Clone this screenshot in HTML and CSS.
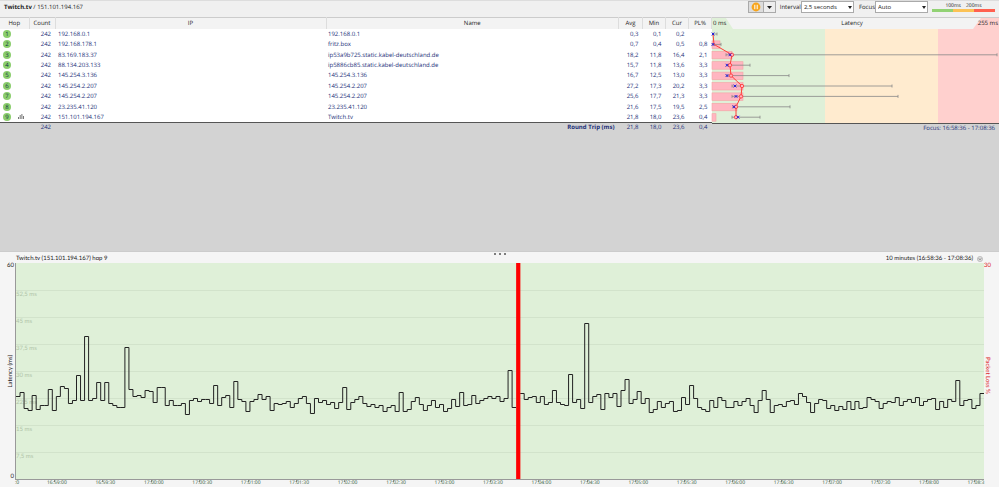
FILE: index.html
```html
<!DOCTYPE html>
<html lang="en">
<head>
<meta charset="utf-8">
<title>Twitch.tv / 151.101.194.167</title>
<link rel="stylesheet" href="styles.css">
</head>
<body>
<header class="toolbar">
  <h1 class="target"><b>Twitch.tv</b> / 151.101.194.167</h1>
  <div class="split">
    <button class="pause" type="button" aria-label="Pause"><svg viewBox="0 0 10 10" width="10" height="10"><circle cx="5" cy="5" r="4.4" fill="#f8a51b"/><path d="M3.8 2.8v4.4M6.2 2.8v4.4" stroke="#fff" stroke-width="1"/></svg></button>
    <button class="more" type="button" aria-label="More"><svg viewBox="0 0 5 3" width="5" height="3"><path d="M0 0h5L2.5 3z" fill="#222"/></svg></button>
  </div>
  <label class="field" for="interval">Interval</label>
  <span class="pick"><select id="interval"><option>2,5 seconds</option></select></span>
  <label class="field" for="focus">Focus</label>
  <span class="pick"><select id="focus"><option>Auto</option></select></span>
  <div class="legend">
    <div class="legend-text"><span>100ms</span><span>200ms</span></div>
    <div class="legend-bar"><i class="good"></i><i class="warn"></i><i class="bad"></i></div>
  </div>
</header>

<main>
<section class="trace">
  <table>
    <colgroup><col class="c-hop"><col class="c-count"><col class="c-ip"><col class="c-name"><col class="c-avg"><col class="c-num"><col class="c-num"><col class="c-num"></colgroup>
    <thead><tr><th>Hop</th><th>Count</th><th>IP</th><th>Name</th><th>Avg</th><th>Min</th><th>Cur</th><th>PL%</th></tr></thead>
    <tbody id="hops"></tbody>
    <tfoot><tr><td></td><td class="n">242</td><td></td><td class="n rt">Round Trip (ms)</td><td class="n">21,8</td><td class="n">18,0</td><td class="n">23,6</td><td class="n">0,4</td></tr></tfoot>
  </table>
  <div class="latency">
    <div class="latency-body">
      <div class="latency-head"><span>0 ms</span><span>Latency</span><span>255 ms</span></div>
      <svg class="latency-plot" id="latency" viewBox="0 0 287 94" preserveAspectRatio="none"></svg>
    </div>
    <p class="focus-range">Focus: 16:58:36 - 17:08:36</p>
  </div>
</section>

<section class="timeline">
  <div class="grip"><i></i><i></i><i></i></div>
  <div class="timeline-head"><span>Twitch.tv (151.101.194.167) hop 9</span><span class="range">10 minutes (16:58:36 - 17:08:36) <svg viewBox="0 0 6 6" width="6" height="6"><circle cx="3" cy="3" r="2.6" fill="#ddd" stroke="#aaa" stroke-width=".6"/><path d="M1.8 2.4L3 3.8l1.2-1.4" fill="none" stroke="#666" stroke-width=".7"/></svg></span></div>
  <div class="chart">
    <div class="y-axis"><span>60</span><span class="up">Latency (ms)</span><span>0</span></div>
    <div class="plot">
      <div class="bands"><span></span><span>52,5 ms</span><span>45 ms</span><span>37,5 ms</span><span>30 ms</span><span>22,5 ms</span><span>15 ms</span><span>7,5 ms</span></div>
      <svg id="graph" viewBox="0 0 240 216" preserveAspectRatio="none"></svg>
    </div>
    <div class="loss-axis"><span>30</span><span class="down">Packet Loss %</span></div>
  </div>
  <div class="times" id="times"></div>
</section>
</main>
<script src="app.js"></script>
</body>
</html>
```
FILE: styles.css
```css
* { box-sizing: border-box; }
body { margin: 0; height: 100vh; display: flex; flex-direction: column; background: #f5f5f5; color: #222; font: 6px/8px "Open Sans", "Noto Sans", sans-serif; text-rendering: geometricPrecision; overflow: hidden; }
h1, p { margin: 0; font-weight: 400; }
.toolbar { display: flex; align-items: center; height: 17px; flex: none; padding: 0 4px 4px; background: #f0f0f0; border-top: 1px solid #ddd; }
.target { flex: 1; font-size: 6px; line-height: 10px; }
.split { display: flex; margin-right: 4px; }
.split button { display: flex; align-items: center; justify-content: center; height: 12px; padding: 0; border: 1px solid #aaa; background: #ddd; }
.split .pause { width: 16px; }
.split .more { width: 12px; border-left: 0; background: #eee; }
.pick { position: relative; display: flex; margin-right: 4px; }
.pick:first-of-type { margin-right: 5px; }
.pick::after { content: ""; position: absolute; right: 2px; top: 5px; border: 2px solid transparent; border-top: 3px solid #222; border-bottom: 0; }
.pick select { appearance: none; width: 53px; height: 12px; padding: 0 2px; border: 1px solid #aaa; border-radius: 0; background: #fff; color: #222; font: inherit; }
.legend { width: 63px; font-size: 5px; line-height: 6px; }
.legend-text { display: flex; justify-content: center; gap: 5px; }
.legend-bar { display: flex; height: 3px; }
.legend-bar i { flex: 1; }
.good { background: #92d274; }
.warn { background: #fcc255; }
.bad { background: #ff6050; }
main { flex: 1; display: flex; flex-direction: column; min-height: 0; }
.trace { flex: 1; display: flex; align-items: flex-start; background: #d3d3d3; min-height: 0; }
table { flex: 1; min-width: 0; table-layout: fixed; border-collapse: collapse; border-top: 1px solid #ccc; }
.c-hop { width: 29px; }
.c-count { width: 26px; }
.c-ip { width: 271px; }
.c-avg { width: 24px; }
.c-num { width: 23px; }
th { height: 11px; padding: 0; border-right: 1px solid #ddd; background: #f3f3f3; font-weight: 400; }
td { padding: 0 2px; color: #1c2f78; white-space: nowrap; }
tbody tr { height: calc(94px / 9); background: #fff; }
tbody td:nth-child(3) { padding-left: 3px; }
tfoot td { padding-bottom: 1px; line-height: 8px; }
tfoot tr { border-top: 1px solid #555; }
td.n { text-align: right; padding-right: 4px; }
.rt { font-weight: 700; }
.hop { display: flex; align-items: center; gap: 7px; padding-left: 1px; }
.badge { width: 8px; height: 8px; border-radius: 50%; background: #8bce6c; color: #134; text-align: center; }
.latency { width: 287px; flex: none; }
.latency-body { border-top: 1px solid #ccc; background: linear-gradient(90deg, #dff0d8 0 113px, #ffebcf 113px 226px, #ffd0ce 226px); }
.latency-head { display: flex; justify-content: space-between; height: 11px; padding: 1px; position: relative; line-height: 9px; }
.latency-head::before { content: ""; position: absolute; inset: 0; background: #f3f3f3; clip-path: polygon(14px 0, 269px 0, 261px 100%, 21px 100%); }
.latency-head span { position: relative; }
.latency-plot { display: block; width: 100%; height: 94px; overflow: visible; }
.focus-range { border-top: 1px solid #555; padding-right: 4px; text-align: right; color: #1c2f78; }
.timeline { flex: none; height: 236px; display: flex; flex-direction: column; border-top: 1px solid #ccc; font-family: Lato, "Open Sans", sans-serif; }
.grip { display: flex; justify-content: center; gap: 3px; height: 3px; padding-top: 1px; }
.grip i { width: 2px; height: 2px; border-radius: 50%; background: #555; }
.timeline-head { display: flex; justify-content: space-between; height: 8px; padding: 0 16px; }
.range { display: flex; align-items: center; gap: 4px; }
.chart { flex: 1; display: flex; min-height: 0; }
.y-axis, .loss-axis { width: 15px; display: flex; flex-direction: column; line-height: 6px; }
.y-axis { justify-content: space-between; align-items: flex-end; padding-right: 1px; }
.up { writing-mode: vertical-rl; transform: rotate(180deg); }
.plot { flex: 1; position: relative; background: #dff0d8; border: solid #999; border-width: 0 0 1px 1px; }
.bands { height: 100%; display: flex; flex-direction: column; color: #b0c4a8; }
.bands span { flex: 1; border-top: 1px solid #d2e3cb; }
.bands span:first-child { border-color: transparent; }
#graph { position: absolute; inset: 0; width: 100%; height: 100%; }
.loss-axis { align-items: flex-start; gap: 88px; color: #d22; }
.down { writing-mode: vertical-rl; }
.times { position: relative; height: 7px; margin: 0 15px; color: #2f5a35; font: 5px/7px "Open Sans", sans-serif; }
.times span { position: absolute; white-space: nowrap; }
.times i { position: absolute; top: 0; width: 1px; height: 2px; background: #999; }
```
FILE: app.js
```js
const hops = [
  ["192.168.0.1", "192.168.0.1", "0,3", "0,1", "0,2", ""],
  ["192.168.178.1", "fritz.box", "0,7", "0,4", "0,5", "0,8"],
  ["83.169.183.37", "ip53a9b725.static.kabel-deutschland.de", "18,2", "11,8", "16,4", "2,1"],
  ["88.134.203.133", "ip5886cb85.static.kabel-deutschland.de", "15,7", "11,8", "13,6", "3,3"],
  ["145.254.3.136", "145.254.3.136", "16,7", "12,5", "13,0", "3,3"],
  ["145.254.2.207", "145.254.2.207", "27,2", "17,3", "20,2", "3,3"],
  ["145.254.2.207", "145.254.2.207", "25,6", "17,7", "21,3", "3,3"],
  ["23.235.41.120", "23.235.41.120", "21,6", "17,5", "19,5", "2,5"],
  ["151.101.194.167", "Twitch.tv", "21,8", "18,0", "23,6", "0,4"]
];
const bars = '<svg viewBox="0 0 6 5" width="6" height="5"><path d="M.5 5V3M2.2 5V1M3.9 5V0M5.5 5V2" stroke="#777"/></svg>';
document.getElementById("hops").innerHTML = hops.map((h, i) =>
  `<tr><td><div class="hop"><span class="badge">${i + 1}</span>${i === 8 ? bars : ""}</div></td><td class="n">242</td><td>${h[0]}</td><td>${h[1]}</td>` +
  h.slice(2).map(v => `<td class="n">${v}</td>`).join("") + "</tr>").join("");

// Per hop: loss bar width, min, average, current and max positions
const marks = [
  [0, 1, 1, 1, 5], [8, 1, 2, 1, 9], [20, 14, 20, 18, 285], [31, 15, 18, 15, 38], [31, 15, 19, 15, 77],
  [31, 20, 30, 23, 180], [31, 20, 29, 24, 186], [25, 21, 24, 22, 78], [4, 20, 24, 26, 48]
];
const rowY = i => 5 + i * 10.4;
let out = "";
marks.forEach(([w, lo, avg, cur, hi], i) => {
  const y = rowY(i);
  if (w) out += `<rect x="0" y="${y - 3.5}" width="${w}" height="7.5" fill="#ffb6c1" stroke="#f3a3a3" stroke-width=".6"/>`;
  out += `<path d="M${lo} ${y}H${hi}M${lo} ${y - 1.5}v3M${hi} ${y - 1.5}v3" stroke="#888" stroke-width=".8"/>`;
});
out += `<polyline points="${marks.map((m, i) => m[2] + "," + rowY(i)).join(" ")}" fill="none" stroke="#ff4038"/>`;
marks.forEach(([w, lo, avg, cur], i) => {
  const y = rowY(i);
  if (i > 1) out += `<circle cx="${avg}" cy="${y}" r="1.7" fill="#ffb6c1" stroke="#ff3030" stroke-width=".8"/>`;
  out += `<path d="M${cur - 1.4} ${y - 1.4}l2.8 2.8m0 -2.8l-2.8 2.8" stroke="#1515e0" stroke-width=".9"/>`;
});
document.getElementById("latency").innerHTML = out;

// One level per 2.5 s sample, in thirds of a pixel; null is a lost packet
const levels = [
  455,442,491,496,451,492,482,480,432,496,454,424,430,475,466,390,467,274,467,461,
  411,465,413,475,482,488,487,307,433,454,452,456,435,438,472,427,427,482,465,482,
  482,475,507,465,461,468,464,464,475,421,480,456,452,488,408,462,468,498,469,463,
  449,462,454,496,474,478,475,468,487,475,460,454,475,504,461,472,465,478,473,490,
  473,426,494,473,462,454,475,484,479,487,482,500,487,482,500,441,499,494,468,458,
  478,496,482,466,486,478,499,490,463,484,442,480,477,451,475,466,460,455,460,455,
  468,460,377,486,null,445,463,457,455,471,454,479,473,435,472,478,482,388,471,464,
  490,235,471,454,448,492,445,457,446,484,437,402,475,463,438,475,460,501,493,470,
  486,475,470,499,497,458,478,421,461,487,494,498,465,488,457,465,488,488,468,481,
  468,460,480,501,465,437,462,501,480,477,484,469,465,479,446,454,471,501,476,463,
  466,491,482,496,484,493,469,494,468,490,486,458,464,468,490,475,470,471,457,482,
  468,462,473,456,481,470,463,461,493,468,486,462,470,407,481,466,462,490,481,446
];
let d = "", lost = "", open = false;
levels.forEach((v, i) => {
  if (v === null) { lost += `<rect x="${i}" y="0" width="1.05" height="216" fill="#f00"/>`; open = false; return; }
  const y = Math.floor(v / 3) - 17.5;
  d += open ? `V${y}H${i + 1}` : `M${i} ${y}H${i + 1}`;
  open = true;
});
document.getElementById("graph").innerHTML =
  `<path d="${d}" fill="none" stroke="#222" stroke-width="1" vector-effect="non-scaling-stroke"/>${lost}`;

// The last label is shortened to end at the edge of the plot
let labels = '<span style="left:0">:0</span>';
for (let s = 24; s <= 594; s += 30) {
  const t = 16 * 3600 + 58 * 60 + 36 + s;
  const p = n => String(n).padStart(2, "0");
  const text = `${p(Math.floor(t / 3600))}:${p(Math.floor(t / 60) % 60)}:${p(t % 60)}`;
  labels += `<i style="left:${(s / 6).toFixed(2)}%"></i><span style="left:${(s / 6 - 0.7).toFixed(2)}%">${s === 594 ? text.slice(0, 7) : text}</span>`;
}
document.getElementById("times").innerHTML = labels;
```
